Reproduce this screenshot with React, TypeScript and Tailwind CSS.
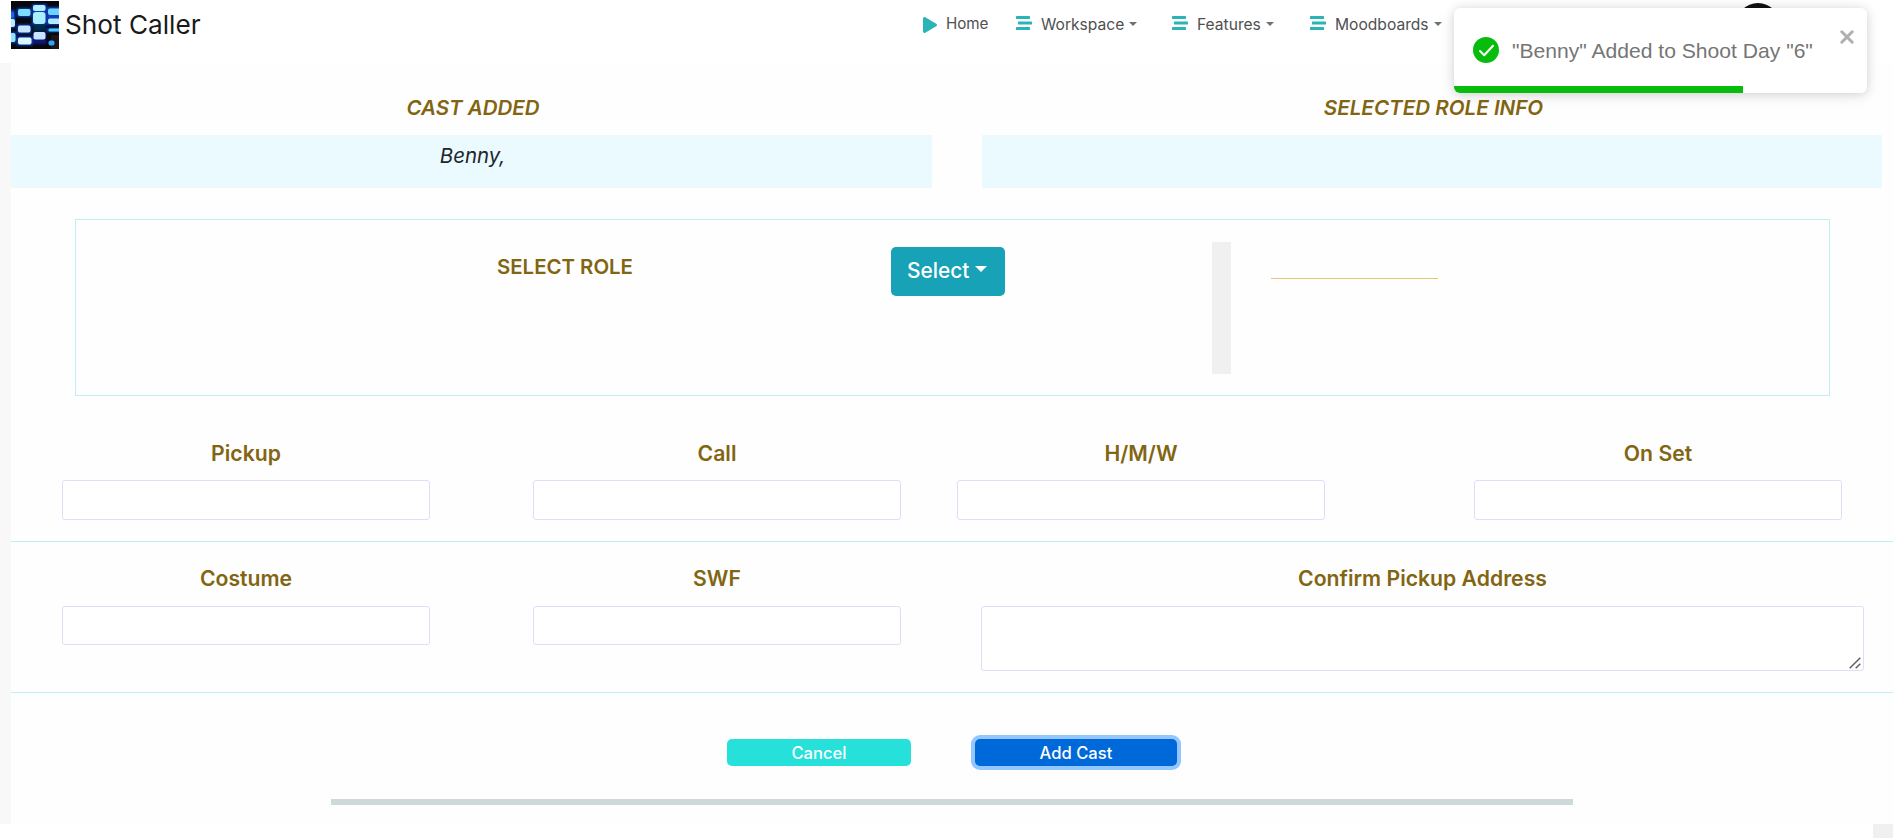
import type { ReactNode } from "react";
import { FaPlay } from "react-icons/fa";

function Logo() {
  return (
    <svg width="48" height="48" viewBox="0 0 48 48" className="mt-px shrink-0">
      <defs>
        <filter id="soft" x="-30%" y="-30%" width="160%" height="160%">
          <feGaussianBlur stdDeviation="0.6" />
        </filter>
        <filter id="glow" x="-50%" y="-50%" width="200%" height="200%">
          <feGaussianBlur stdDeviation="0.9" />
        </filter>
      </defs>
      <rect width="48" height="48" fill="#07080d" />
      <rect x="40" y="34" width="8" height="14" fill="#1b1719" />
      <g filter="url(#glow)" fill="#0b3fc0">
        <rect x="-2" y="9" width="6" height="18" />
        <rect x="-2" y="31" width="7" height="11" />
        <rect x="6" y="7" width="14" height="9" />
        <rect x="6" y="23.500" width="14" height="9" />
        <rect x="6" y="35.500" width="15.500" height="9" />
        <rect x="21" y="3" width="14.500" height="21" />
        <rect x="22" y="23" width="13" height="7" fill="#062a48" />
        <rect x="22" y="31" width="13.500" height="12" fill="#0a1478" />
        <rect x="36" y="6" width="14" height="18" />
        <rect x="36" y="27" width="14" height="4" />
      </g>
      <g filter="url(#soft)">
        <rect x="-4" y="11" width="7" height="6" rx="1.5" fill="#1668f0" />
        <rect x="-4" y="18" width="8" height="8" rx="2" fill="#b8ecff" />
        <rect x="-4" y="32" width="8.500" height="9" rx="2" fill="#8fe4ff" />
        <rect x="7" y="8" width="12.500" height="7" rx="2" fill="#7cdcff" />
        <rect x="7" y="24.500" width="12.500" height="7" rx="2" fill="#c4e4ff" />
        <rect x="7" y="36.500" width="13.500" height="7" rx="2" fill="#dcf6ff" />
        <rect x="22" y="4" width="12.500" height="6" rx="2" fill="#b4f0ff" />
        <rect x="22" y="11" width="12.500" height="12" rx="3" fill="#a9f0ff" />
        <rect x="22.500" y="31" width="12" height="7.500" rx="2" fill="#c9e4ff" />
        <rect x="37" y="7.500" width="13" height="6.500" rx="2" fill="#6ed4ff" />
        <rect x="37" y="17.500" width="13" height="5.500" rx="2" fill="#b2eaff" />
        <rect x="37.500" y="27.500" width="13" height="3" rx="1.500" fill="#4ec8ff" />
        <rect x="37.500" y="39.500" width="6" height="5" rx="2" fill="#2fa4ff" />
      </g>
    </svg>
  );
}

function StreamIcon() {
  return (
    <svg width="16" height="14" viewBox="0 0 16 14" fill="#2ab4b6" className="shrink-0">
      <rect x="0" y="0" width="14" height="3" rx="0.6" />
      <rect x="2" y="5.500" width="14" height="3" rx="0.6" />
      <rect x="0" y="11" width="14" height="3" rx="0.6" />
    </svg>
  );
}

function NavItem({ label, className }: { label: string; className: string }) {
  return (
    <a className={`flex h-[30px] shrink-0 items-start ${className}`}>
      <span className="pt-0.5">
        <StreamIcon />
      </span>
      <span className="ml-[9px] text-[15.600px] leading-[21px] text-[#505050]">{label}</span>
      <span className="mt-2 ml-[5px] border-x-4 border-t-4 border-x-transparent border-t-[#707070]" />
    </a>
  );
}

function Label({ children }: { children: ReactNode }) {
  return (
    <label className="block pt-px text-center text-[21.200px] leading-[21px] font-semibold whitespace-nowrap text-[#826512]">
      {children}
    </label>
  );
}

function Field({ label, className = "", inputClass }: { label: string; className?: string; inputClass: string }) {
  return (
    <div className={`w-[368px] shrink-0 ${className}`}>
      <Label>{label}</Label>
      <input className={`block w-full rounded-[3px] border border-[#dedefa] bg-white px-2 ${inputClass}`} />
    </div>
  );
}

function Toast() {
  return (
    <div className="absolute top-2 left-[1454px] h-[85px] w-[413px] rounded-md bg-white font-['Liberation_Sans',sans-serif] shadow-[0_1px_10px_rgba(0,0,0,0.1),0_2px_15px_rgba(0,0,0,0.1)]">
      <div className="flex h-[78px] items-start pl-[19px]">
        <svg width="26" height="26" viewBox="0 0 26 26" className="mt-[29px] shrink-0">
          <circle cx="13" cy="13" r="13" fill="#07bc0c" />
          <path d="M7 14l4.200 4.200L20 8.800" fill="none" stroke="#fff" strokeWidth="2" strokeLinecap="round" strokeLinejoin="round" />
        </svg>
        <span className="mt-[31px] ml-[13px] text-[21.100px] leading-6 whitespace-nowrap text-[#757575]">"Benny" Added to Shoot Day "6"</span>
        <svg width="14" height="14" viewBox="0 0 14 14" className="mt-[22px] mr-[13px] ml-auto shrink-0">
          <path d="M1.800 1.800l10.400 10.400M12.200 1.800L1.800 12.200" stroke="#b0b0b0" strokeWidth="3" strokeLinecap="round" />
        </svg>
      </div>
      <div className="h-[7px] overflow-hidden rounded-b-md">
        <div className="h-full w-[288.500px] bg-[#07bc0c]" />
      </div>
    </div>
  );
}

export default function App() {
  return (
    <div className="relative h-[838px] w-[1893px] overflow-hidden bg-white font-[Inter,sans-serif] text-[#212529]">
      <header className="flex h-[63px] items-start pl-[11px]">
        <Logo />
        <span className="mt-2 ml-[6px] w-[150px] text-[26.200px] leading-[34px] whitespace-nowrap text-[#1a1a1a]">Shot Caller</span>
        <nav className="mt-3.5 ml-[708px] flex items-start">
          <a className="flex w-[93px] shrink-0 items-start">
            <FaPlay className="mt-[2.500px] h-4 w-[14px] text-[#2ab4b6]" preserveAspectRatio="none" />
            <span className="ml-[9px] text-[15.200px] leading-5 tracking-[-0.1px] text-[#505050]">Home</span>
          </a>
          <NavItem label="Workspace" className="w-[156px]" />
          <NavItem label="Features" className="w-[138px]" />
          <NavItem label="Moodboards" className="w-[140px]" />
        </nav>
        <div className="mt-[3px] ml-[286px] size-11 shrink-0 rounded-full bg-[#111]" />
      </header>

      <main className="h-[761px] border-l-[11px] border-[#f8f8f8] bg-[#fefefe] text-[#212529]">
        <section className="flex gap-[50px] pt-[35px]">
          <div className="w-[921px]">
            <h2 className="pl-[3px] text-center text-[20.500px] leading-5 font-semibold text-[#826512] italic">CAST ADDED</h2>
            <p className="mt-[17px] h-[53px] bg-[#eafaff] pl-0.5 text-center text-[20.400px] leading-[41px] italic">Benny,</p>
          </div>
          <div className="w-[900px]">
            <h2 className="pl-[3px] text-center text-[20.600px] leading-5 font-semibold text-[#826512] italic">SELECTED ROLE INFO</h2>
            <p className="mt-[17px] h-[53px] bg-[#eafaff]" />
          </div>
        </section>

        <section className="mt-[31px] ml-16 flex h-[177px] w-[1755px] items-start border border-[#c3eef2]">
          <div className="mt-9 w-[815px] pl-[421px] text-[20.400px] leading-[22px] font-semibold whitespace-nowrap text-[#826512]">
            SELECT ROLE
          </div>
          <button className="mt-[27px] flex h-[49px] w-[114px] items-start rounded-[5px] bg-[#18a2b8] pl-[16px] text-[20.900px] font-medium text-white">
            <span className="mt-3 leading-6">Select</span>
            <span className="mt-[19px] ml-[6px] border-x-[6px] border-t-[6px] border-x-transparent border-t-white" />
          </button>
          <div className="mt-[22px] ml-[207px] h-[132px] w-[19px] bg-[#f0f0f0]" />
          <div className="mt-[58px] ml-10 h-px w-[167px] bg-[#dfc777]" />
        </section>

        <section className="flex h-[146px] border-b border-[#c3eef0] pt-[46px] pl-[51px]">
          <Field label="Pickup" inputClass="mt-4 h-10" />
          <Field label="Call" className="ml-[103px]" inputClass="mt-4 h-10" />
          <Field label="H/M/W" className="ml-14" inputClass="mt-4 h-10" />
          <Field label="On Set" className="ml-[149px]" inputClass="mt-4 h-10" />
        </section>

        <section className="flex h-[151px] border-b border-[#bbf0f8] pt-[25px] pl-[51px]">
          <Field label="Costume" inputClass="mt-[17px] h-[39px]" />
          <Field label="SWF" className="ml-[103px]" inputClass="mt-[17px] h-[39px]" />
          <div className="relative ml-20 h-[104px] w-[883px] shrink-0">
            <Label>Confirm Pickup Address</Label>
            <textarea className="mt-[17px] block h-[65px] w-full resize-none rounded-[3px] border border-[#dedefa] bg-white" />
            <svg width="12" height="12" viewBox="0 0 12 12" className="absolute right-[3px] bottom-[2px]">
              <path d="M0.700 11.300L11.300 0.700M6.700 11.300L11.300 6.700" stroke="#5c5c5c" strokeWidth="1.400" />
            </svg>
          </div>
        </section>

        <div className="mt-[46px] ml-[716px] flex gap-16 text-[16.600px] leading-[26px] font-medium text-white">
          <button className="h-[27px] w-[184px] rounded-[5px] bg-[#26e0da]">Cancel</button>
          <button className="h-[27px] w-[202px] rounded-[5px] bg-[#0069d9] shadow-[0_0_0_4px_#94c6ff]">Add Cast</button>
        </div>
        <div className="mt-[33px] ml-80 h-1.5 w-[1242px] bg-[#cfd9db]" />
      </main>
      <div className="ml-auto h-3.5 w-5 bg-[#f0f0f0]" />

      <Toast />
    </div>
  );
}
